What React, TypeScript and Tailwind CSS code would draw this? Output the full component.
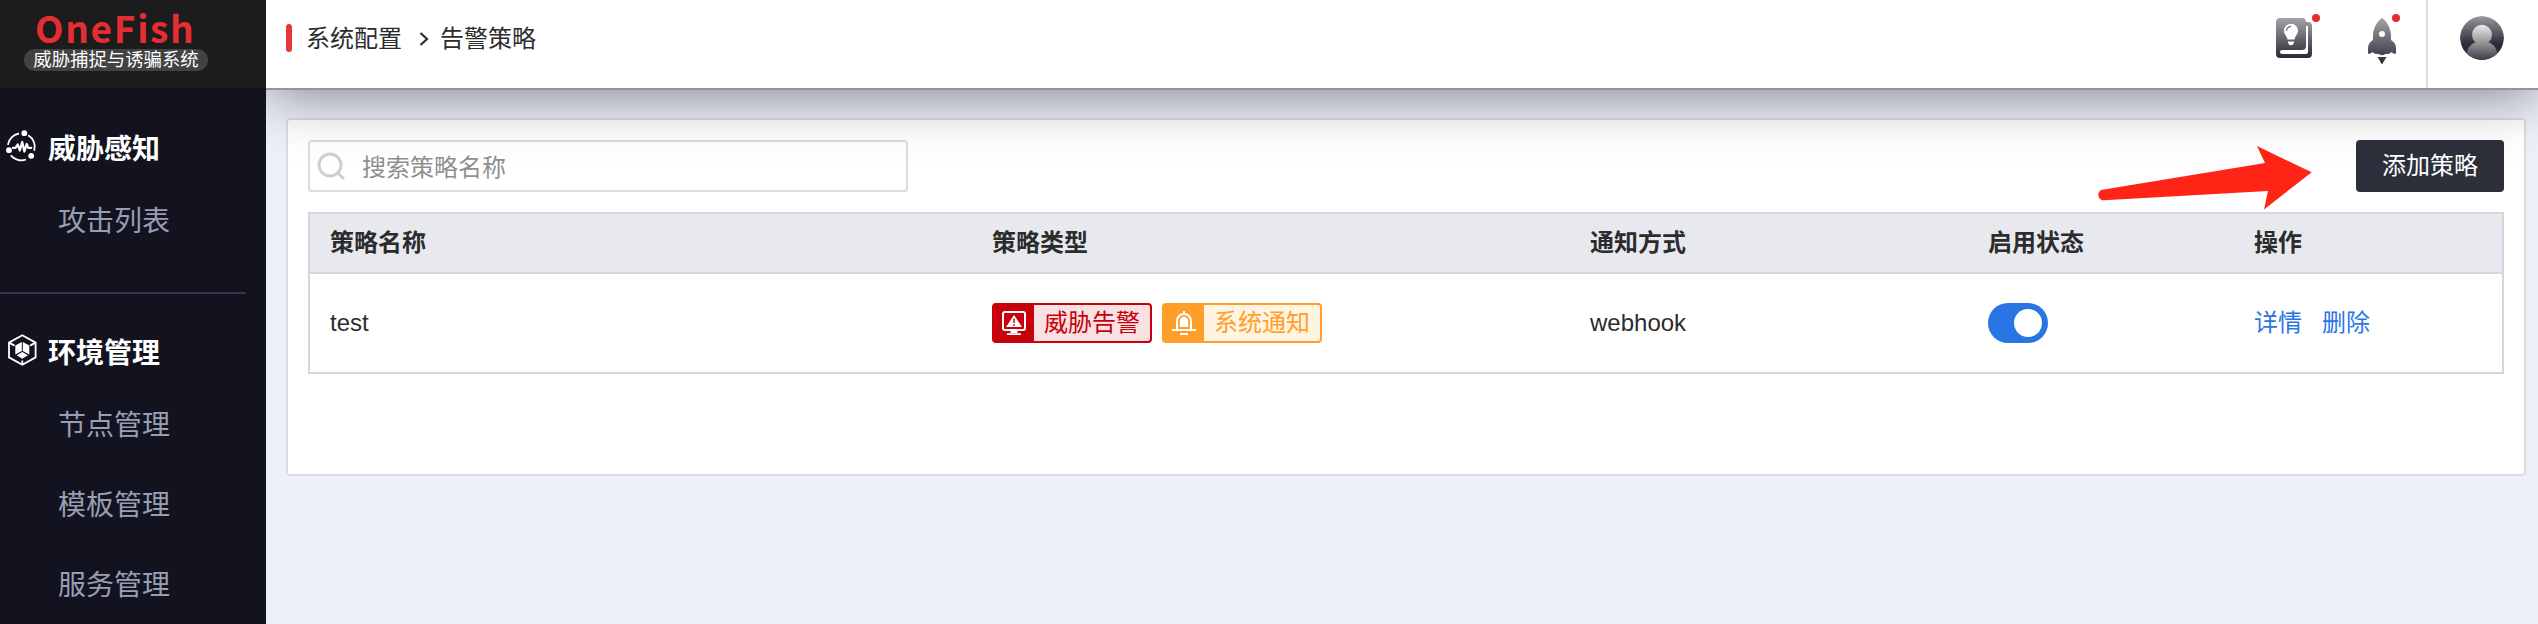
import React from "react";

const gradientStops = (
  <>
    <stop offset="0" stopColor="#a3a3a7" />
    <stop offset="1" stopColor="#2b2b39" />
  </>
);

function SenseIcon() {
  return (
    <svg width="32" height="32" viewBox="0 0 32 32" fill="none" className="mb-1 shrink-0">
      <g stroke="#fff" strokeWidth="1.800">
        <path d="M2.900 14.800A13.500 13.500 0 0 1 14 3.500" />
        <path d="M23.200 5.200A13.500 13.500 0 0 1 29.200 20.800" />
        <path d="M5.800 25.400A13.500 13.500 0 0 0 21 29.500" />
      </g>
      <g fill="#fff">
        <circle cx="19.300" cy="3.200" r="2.900" />
        <circle cx="4" cy="20.200" r="2.900" />
        <circle cx="26.200" cy="25.800" r="2.900" />
      </g>
      <path d="M8 17.800h2.500l2.300-3.300 2 6 2.400-8.500 2.200 9.500 2.300-7.500 1.500 3.800h3" stroke="#fff" strokeWidth="2.300" strokeLinejoin="round" strokeLinecap="round" />
    </svg>
  );
}

function CubeIcon() {
  return (
    <svg width="30" height="32" viewBox="0 0 30 32" fill="none" className="mb-1 shrink-0">
      <path d="M15.300 1.200L28.600 8.600v14.800L15.300 30.800 2 23.400V8.600z" stroke="#fff" strokeWidth="1.800" />
      <path d="M2 8.600l5.500 3M28.600 8.600l-5.500 3M15.300 31v-4.500" stroke="#fff" strokeWidth="1.800" />
      <path d="M14.800 8v9L8.300 20.600v-9zM15.800 8v9l6.500 3.600v-9zM15.300 18l5.700 3.300-5.700 3.500-5.700-3.500z" fill="#fff" />
    </svg>
  );
}

function BookIcon() {
  return (
    <svg width="36" height="40" viewBox="0 0 36 40" className="block">
      <defs><linearGradient id="book" x1="0" y1="0" x2="0" y2="1">{gradientStops}</linearGradient></defs>
      <path fill="url(#book)" fillRule="evenodd" d="M4 0h22a4 4 0 0 1 4 4h2a4 4 0 0 1 4 4v28a4 4 0 0 1-4 4H4a4 4 0 0 1-4-4V4a4 4 0 0 1 4-4zM30 8v20a4 4 0 0 1-4 4H6a2 2 0 0 0 0 4h24a2 2 0 0 0 2-2V8z" />
      <path fill="#fff" d="M15 5.800a7 7 0 0 1 7 7c0 3-1.800 4.300-2.700 6.200l-.8 2.600h-7l-.8-2.600C9.800 17.100 8 15.800 8 12.800a7 7 0 0 1 7-7zM11.700 23.400h6.600l-.7 2a2.800 2.800 0 0 1-5.200 0z" />
      <path d="M10.600 12.800a4.400 4.400 0 0 1 4.400-4.400" stroke="#858589" strokeWidth="1.600" fill="none" />
    </svg>
  );
}

function RocketIcon() {
  return (
    <svg width="28" height="46" viewBox="0 0 28 46" className="block">
      <defs><linearGradient id="rocket" x1="0" y1="0" x2="0" y2="1">{gradientStops}</linearGradient></defs>
      <path fill="url(#rocket)" fillRule="evenodd" d="M14 0c5.500 3.500 9 11 9 18v4c3 1.500 5 4.500 5 8v5.500c-1.300 1-3-.2-4.500-1.500-1.500 1.500-3 2.500-5.500 1.800a7 7 0 0 1-8 0c-2.500.7-4-.3-5.500-1.800C3 35.300 1.300 36.500 0 35.500V30c0-3.500 2-6.500 5-8v-4C5 11 8.500 3.500 14 0zm0 13a3 3 0 1 0 0 6 3 3 0 0 0 0-6zM9.500 39h9L14 46.500z" />
    </svg>
  );
}

function AvatarIcon() {
  return (
    <svg width="44" height="44" viewBox="0 0 44 44" className="block">
      <defs>
        <linearGradient id="disc" x1="0" y1="0" x2="0" y2="1">
          <stop offset="0" stopColor="#98989c" />
          <stop offset=".65" stopColor="#2b2b39" />
          <stop offset="1" stopColor="#2b2b39" />
        </linearGradient>
        <linearGradient id="head" x1="0" y1="0" x2="0" y2="1">
          <stop offset="0" stopColor="#ececec" />
          <stop offset="1" stopColor="#8a8a8c" />
        </linearGradient>
        <linearGradient id="torso" x1="0" y1="0" x2="0" y2="1">
          <stop offset="0" stopColor="#99999b" />
          <stop offset="1" stopColor="#3d3d48" />
        </linearGradient>
        <clipPath id="round"><circle cx="22" cy="22" r="22" /></clipPath>
      </defs>
      <g clipPath="url(#round)">
        <circle cx="22" cy="22" r="22" fill="url(#disc)" />
        <path d="M7 44V38c0-6 4-11 10-12h10c6 1 10 6 10 12v6z" fill="url(#torso)" />
        <circle cx="22" cy="18.800" r="10" fill="url(#head)" />
      </g>
    </svg>
  );
}

function MonitorAlertIcon() {
  return (
    <svg width="24" height="24" viewBox="0 0 24 24" fill="none">
      <rect x="1" y="1" width="22" height="18" rx="2" stroke="#fff" strokeWidth="2" />
      <path d="M12 4l8 12H4z" fill="#fff" />
      <path d="M12 7.500v4.500M12 13.300v1.700" stroke="#c7000b" strokeWidth="1.400" />
      <path d="M8.500 19h7v3h-7zM5 22.200h14V24H5z" fill="#fff" />
    </svg>
  );
}

function BellIcon() {
  return (
    <svg width="24" height="24" viewBox="0 0 24 24" fill="none">
      <path d="M0 18.900h24M8 23h8M12 0v3" stroke="#fff" strokeWidth="2" />
      <path d="M5 18v-8a7 7 0 0 1 14 0v8" stroke="#fff" strokeWidth="2" />
      <path d="M7.800 16v-6a4.200 4.200 0 0 1 8.400 0v6z" fill="#fff" />
    </svg>
  );
}

function SideItem({ children }: { children: React.ReactNode }) {
  return <div className="flex h-20 items-center pt-1 pl-[58px] text-[28px] leading-none text-[#989eb3]">{children}</div>;
}

const columns = "grid grid-cols-[662px_598px_398px_266px_1fr] items-center pl-5";

export default function App() {
  return (
    <div className="flex h-[624px] w-full overflow-hidden bg-[#edf0f9] font-['Liberation_Sans','Noto_Sans_CJK_SC',sans-serif] text-2xl text-[#2c2c2c]">
      <aside className="flex w-[266px] shrink-0 flex-col bg-[#13131f]">
        <div className="flex h-[88px] shrink-0 flex-col items-start bg-[#1c1c1c]">
          <div className="flex h-[49px] items-center pl-[35px] pt-[5px] font-['Noto_Sans_CJK_SC',sans-serif] text-[37px] font-bold leading-none tracking-[1.700px] text-[#e52e32]">OneFish</div>
          <div className="ml-6 flex h-[22px] w-[184px] items-center justify-center rounded-full bg-[#424242] pt-px text-[18.400px] leading-none whitespace-nowrap text-white">威胁捕捉与诱骗系统</div>
        </div>
        <div className="flex h-[120px] items-center gap-[11px] pl-[5px] text-[28px] font-bold leading-none text-white">
          <SenseIcon /><span className="pt-[3px]">威胁感知</span>
        </div>
        <div className="-mt-7"><SideItem>攻击列表</SideItem></div>
        <div className="mt-8 h-0.5 w-[246px] shrink-0 bg-[#383848]" />
        <div className="flex h-[116px] items-center gap-[11px] pl-[7px] text-[28px] font-bold leading-none text-white">
          <CubeIcon /><span className="pt-1">环境管理</span>
        </div>
        <div className="-mt-[26px]">
          <SideItem>节点管理</SideItem>
          <SideItem>模板管理</SideItem>
          <SideItem>服务管理</SideItem>
        </div>
      </aside>
      <div className="flex min-w-0 flex-1 flex-col overflow-hidden">
        <header className="relative z-10 flex h-[88px] shrink-0 items-stretch justify-between bg-white shadow-[0_2px_0_#93959d,0_4px_60px_rgba(0,0,0,0.5)]">
          <div className="flex h-[76px] items-center pl-5 leading-none">
            <span className="mr-3.5 h-7 w-1.5 rounded-sm bg-[#e4393c]" />
            <span className="pt-px">系统配置</span>
            <svg width="10" height="14" viewBox="0 0 10 14" className="mt-0.5 ml-[17px] mr-[11px]"><path d="M1.500 1L8 7l-6.500 6" fill="none" stroke="#2c2c2c" strokeWidth="2.200" /></svg>
            <span className="pt-px">告警策略</span>
          </div>
          <div className="flex">
            <div className="relative mt-[18px] mr-14 h-10 w-9"><BookIcon /><i className="absolute -top-1 -right-2 size-2 rounded-full bg-[#e52e32]" /></div>
            <div className="relative mt-[18px] mr-[30px] h-[46px] w-7"><RocketIcon /><i className="absolute -top-1 -right-1 size-2 rounded-full bg-[#e52e32]" /></div>
            <div className="border-l-2 border-[#dcdcdf] pt-4 pr-[34px] pl-8"><AvatarIcon /></div>
          </div>
        </header>
        <main className="mt-[30px] mr-3 ml-5 h-[358px] shrink-0 rounded border-2 border-[#dcdcdf] bg-white p-5">
          <div className="flex h-[52px] justify-between">
            <div className="flex w-[600px] items-center rounded border-2 border-[#dcdcdc] leading-none text-[#8f8f8f]">
              <svg width="28" height="28" viewBox="0 0 28 28" className="mr-[17px] ml-[7px]"><circle cx="13" cy="13" r="11" fill="none" stroke="#cfcfcf" strokeWidth="3" /><path d="M20.500 20.500L27 27" stroke="#cfcfcf" strokeWidth="3" /></svg>
              <span className="pt-[3px]">搜索策略名称</span>
            </div>
            <div className="relative flex">
              <svg width="216" height="66" viewBox="0 0 216 66" className="absolute top-[5px] right-[190px]">
                <path fill="#ff2516" d="M4.500 44.800L167 18 159 1l54.700 26.300L166 64.500 170 46 6 55.300C-1 55.500-1.500 45.500 4.500 44.800z" />
              </svg>
              <button className="w-[148px] rounded bg-[#2d2f3b] leading-none text-white">添加策略</button>
            </div>
          </div>
          <div className="mt-5 h-[162px] border-2 border-[#d6d7dd]">
            <div className={`${columns} h-[60px] border-b-2 border-[#d6d7dd] bg-[#e8e9ee] leading-none font-bold`}>
              <span>策略名称</span><span>策略类型</span><span>通知方式</span><span>启用状态</span><span>操作</span>
            </div>
            <div className={`${columns} h-[98px] leading-none`}>
              <span>test</span>
              <div className="flex gap-2.5">
                <div className="flex h-10 w-40 rounded border-2 border-[#c7000b] bg-[#f9e0e2] text-[#c7000b]">
                  <div className="flex w-10 items-center justify-center bg-[#c7000b]"><MonitorAlertIcon /></div>
                  <div className="flex flex-1 items-center pl-2.5">威胁告警</div>
                </div>
                <div className="flex h-10 w-40 rounded border-2 border-[#ff9f29] bg-[#fff3e2] text-[#ff9f29]">
                  <div className="flex w-10 items-center justify-center bg-[#ff9f29]"><BellIcon /></div>
                  <div className="flex flex-1 items-center pl-2.5">系统通知</div>
                </div>
              </div>
              <span>webhook</span>
              <div className="flex h-10 w-[60px] items-center justify-end rounded-full bg-[#2a75e4] pr-1.5"><div className="size-7 rounded-full bg-white" /></div>
              <div className="flex gap-5 text-[#2a75e4]"><span>详情</span><span>删除</span></div>
            </div>
          </div>
        </main>
      </div>
    </div>
  );
}
